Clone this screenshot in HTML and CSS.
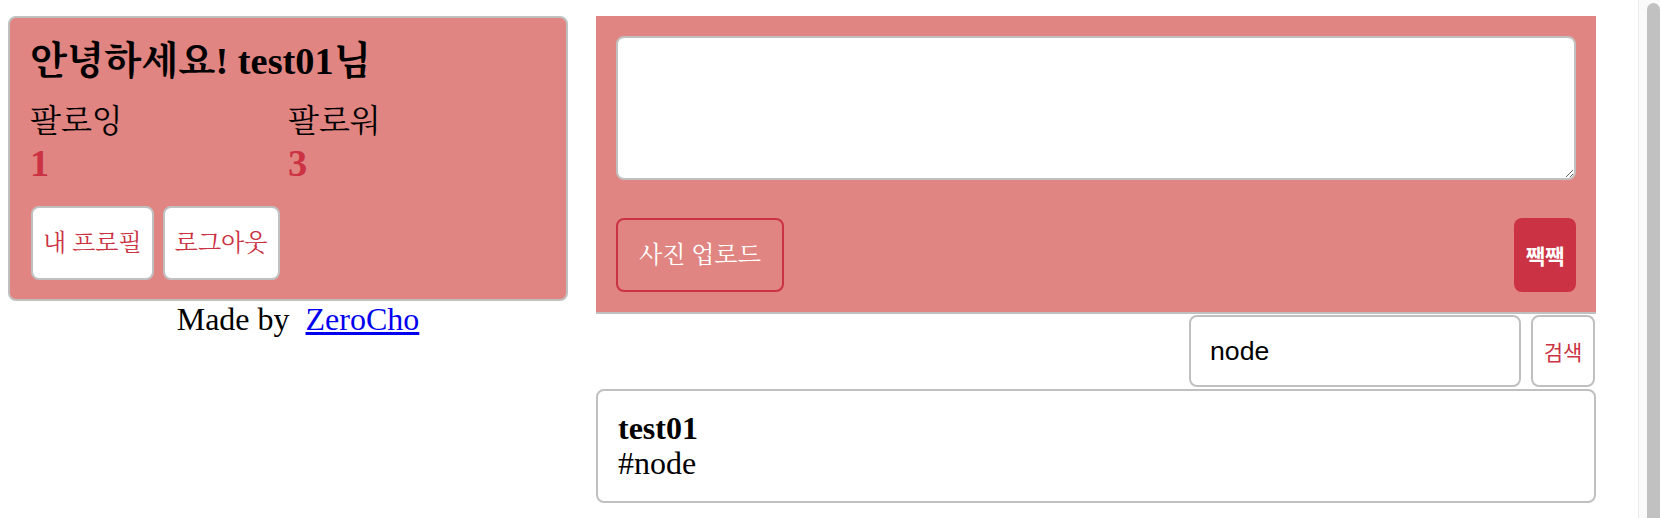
FILE: index.html
```html
<!DOCTYPE html>
<html lang="ko">
<head>
<meta charset="utf-8">
<title>NodeBird</title>
<link rel="stylesheet" href="styles.css">
</head>
<body>
<div class="screen">
  <div class="page">
    <div class="profile-wrap">
      <div class="profile">
        <div class="user-name">안녕하세요! test01님</div>
        <div class="counts">
          <div class="half">
            <div class="label">팔로잉</div>
            <div class="count">1</div>
          </div>
          <div class="half">
            <div class="label">팔로워</div>
            <div class="count">3</div>
          </div>
        </div>
        <div class="actions">
          <a class="btn" href="#">내 프로필</a>
          <a class="btn" href="#">로그아웃</a>
        </div>
      </div>
      <footer class="footer">Made by&nbsp; <a class="footer-link" href="#">ZeroCho</a></footer>
    </div>
    <div class="timeline">
      <form class="tweet-form">
        <textarea class="tweet-input"></textarea>
        <div class="form-actions">
          <label class="img-label">사진 업로드</label>
          <button class="tweet-btn" type="button">짹짹</button>
        </div>
      </form>
      <form class="search">
        <input class="search-input" type="text" value="node">
        <button class="search-btn" type="button">검색</button>
      </form>
      <div class="twit">
        <div class="twit-author">test01</div>
        <div class="twit-content">#node</div>
      </div>
    </div>
  </div>
  <div class="scrollbar"><div class="thumb"></div></div>
</div>
</body>
</html>
```

FILE: styles.css
```css
* { box-sizing: border-box; }

html, body {
  margin: 0;
  padding: 0;
  background: #ffffff;
}

body {
  font-family: "Liberation Serif", "Noto Serif CJK KR", "Noto Sans CJK KR", serif;
  font-size: 32px;
  line-height: 35px;
  color: #000000;
}

.screen {
  display: flex;
  height: 518px;
  overflow: hidden;
}

.page {
  flex: 1;
  display: flex;
  align-items: flex-start;
  gap: 8px;
  padding: 16px 0 0 8px;
}

/* profile */
.profile-wrap {
  width: 580px;
  flex-shrink: 0;
}

.profile {
  width: 560px;
  padding: 20px 20px 19px;
  border: 2px solid #c0c0c0;
  border-radius: 8px;
  background: #e08581;
}

.user-name {
  font-weight: bold;
  font-size: 38.4px;
  line-height: 46px;
}

.counts {
  display: flex;
  margin-top: 19px;
}

.half {
  width: 50%;
}

.label {
  line-height: 37px;
}

.count {
  font-weight: bold;
  font-size: 38.4px;
  line-height: 46px;
  color: #cb3243;
}

.actions {
  display: flex;
  gap: 9px;
  margin-top: 20px;
  padding-left: 1px;
}

.btn {
  display: block;
  height: 74px;
  padding: 0 10px;
  border: 2px solid #c0c0c0;
  border-radius: 8px;
  background: #ffffff;
  color: #cb3243;
  font-size: 24px;
  line-height: 70px;
  text-decoration: none;
}

.footer {
  text-align: center;
  line-height: 37px;
}

.footer-link {
  color: #0000ee;
  text-decoration: underline;
}

/* timeline */
.timeline {
  width: 1000px;
  flex-shrink: 0;
}

.tweet-form {
  margin: 0;
  padding: 20px;
  background: #e08581;
  border-bottom: 2px solid #c0c0c0;
}

.tweet-input {
  display: block;
  width: 100%;
  height: 144px;
  margin: 0;
  padding: 20px;
  border: 2px solid #c0c0c0;
  border-radius: 8px;
  background: #ffffff;
  font-family: "Liberation Mono", monospace;
  font-size: 26px;
}

.form-actions {
  display: flex;
  justify-content: space-between;
  margin-top: 38px;
}

.img-label {
  display: block;
  height: 74px;
  padding: 0 21px;
  border: 2px solid #cb3243;
  border-radius: 8px;
  color: #ffffff;
  font-size: 24px;
  line-height: 70px;
}

.tweet-btn {
  width: 62px;
  height: 74px;
  padding: 0;
  border: 0;
  border-radius: 8px;
  background: #cb3243;
  color: #ffffff;
  font-family: "Noto Sans CJK KR", sans-serif;
  font-weight: bold;
  font-size: 21px;
  line-height: 74px;
}

.search {
  display: flex;
  justify-content: flex-end;
  gap: 10px;
  margin: 1px 1px 0 0;
}

.search-input {
  width: 332px;
  height: 72px;
  margin: 0;
  padding: 0 19px;
  border: 2px solid #c0c0c0;
  border-radius: 8px;
  background: #ffffff;
  color: #000000;
  font-family: "Liberation Sans", Arial, sans-serif;
  font-size: 26.67px;
}

.search-btn {
  width: 64px;
  height: 72px;
  margin: 0;
  padding: 0;
  border: 2px solid #c0c0c0;
  border-radius: 8px;
  background: #ffffff;
  color: #cb3243;
  font-family: "Noto Sans CJK KR", sans-serif;
  font-size: 21px;
}

.twit {
  margin-top: 2px;
  padding: 20px;
  border: 2px solid #c0c0c0;
  border-radius: 8px;
}

.twit-author {
  font-weight: bold;
}

/* scrollbar strip */
.scrollbar {
  width: 22px;
  flex-shrink: 0;
  background: #fafafa;
  border-left: 1px solid #ebebeb;
  padding: 3px 0 0 8px;
}

.thumb {
  height: 100%;
  background: #c1c1c1;
  border-radius: 7px 7px 0 0;
}
```
